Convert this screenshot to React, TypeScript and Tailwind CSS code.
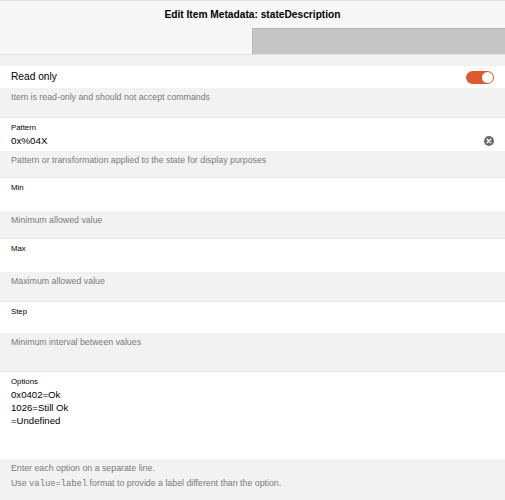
const font = { fontFamily: '"Liberation Sans", Arial, sans-serif' };

type FieldProps = {
  label: string;
  value?: string;
  lines?: string[];
  clear?: boolean;
  height: string;
  desc: React.ReactNode;
  descHeight: string;
};

const ClearIcon = () => (
  <svg width="10" height="10" viewBox="0 0 10 10">
    <circle cx="5" cy="5" r="5" fill="#6b6b6b" />
    <path d="M3.2 3.2 L6.8 6.8 M6.8 3.2 L3.2 6.8" stroke="#fff" strokeWidth="1.3" strokeLinecap="round" />
  </svg>
);

const Field = ({ label, value, lines, clear, height, desc, descHeight }: FieldProps) => (
  <>
    <div className={`bg-white border-t border-[#e6e6e6] pl-[11px] pr-[11px] pt-[4px] ${height}`}>
      <div className="text-[7.8px] leading-[11px] text-black">{label}</div>
      {value !== undefined && (
        <div className="flex items-center justify-between mt-[1px]">
          <span className="text-[9.8px] leading-[14px] text-black">{value}</span>
          {clear && <ClearIcon />}
        </div>
      )}
      {lines && (
        <div className="text-[9.6px] leading-[13px] text-black mt-[1px]">
          {lines.map((l) => (
            <div key={l}>{l}</div>
          ))}
        </div>
      )}
    </div>
    <div className={`bg-[#f2f2f2] pl-[11px] pt-[2px] text-[8.8px] leading-[15px] text-[#7a7a7a] ${descHeight}`}>
      {desc}
    </div>
  </>
);

export default function App() {
  return (
    <div className="w-[505px] h-[500px] overflow-hidden bg-[#f2f2f2]" style={font}>
      <div className="h-[55px] bg-[#f7f7f7] border-t border-b border-[#e2e2e2]">
        <div className="h-[27px] flex items-center justify-center text-[10.2px] font-bold text-black">
          Edit Item Metadata: stateDescription
        </div>
        <div className="flex justify-end">
          <div className="w-[253px] h-[26px] bg-[#c6c6c6] border-l border-t border-[#b8b8b8]" />
        </div>
      </div>
      <div className="h-[11px]" />
      <div className="h-[22px] bg-white flex items-center justify-between pl-[11px] pr-[11px]">
        <span className="text-[10.2px] text-black">Read only</span>
        <div className="w-[28px] h-[13px] rounded-full bg-[#de5a2e] flex items-center justify-end pr-[1px]">
          <div className="w-[11px] h-[11px] rounded-full bg-white" />
        </div>
      </div>
      <div className="h-[29px] bg-[#f2f2f2] pl-[11px] pt-[2px] text-[8.8px] leading-[15px] text-[#7a7a7a]">
        Item is read-only and should not accept commands
      </div>
      <Field
        label="Pattern"
        value="0x%04X"
        clear
        height="h-[34px]"
        desc="Pattern or transformation applied to the state for display purposes"
        descHeight="h-[26px]"
      />
      <Field label="Min" height="h-[34px]" desc="Minimum allowed value" descHeight="h-[27px]" />
      <Field label="Max" height="h-[34px]" desc="Maximum allowed value" descHeight="h-[29px]" />
      <Field label="Step" height="h-[32px]" desc="Minimum interval between values" descHeight="h-[38px]" />
      <Field
        label="Options"
        lines={['0x0402=Ok', '1026=Still Ok', '=Undefined']}
        height="h-[88px]"
        desc={
          <>
            <div>Enter each option on a separate line.</div>
            <div>
              Use <span style={{ fontFamily: '"Liberation Mono", monospace' }}>value=label</span> format to provide a label different than the option.
            </div>
          </>
        }
        descHeight="h-[41px]"
      />
    </div>
  );
}
